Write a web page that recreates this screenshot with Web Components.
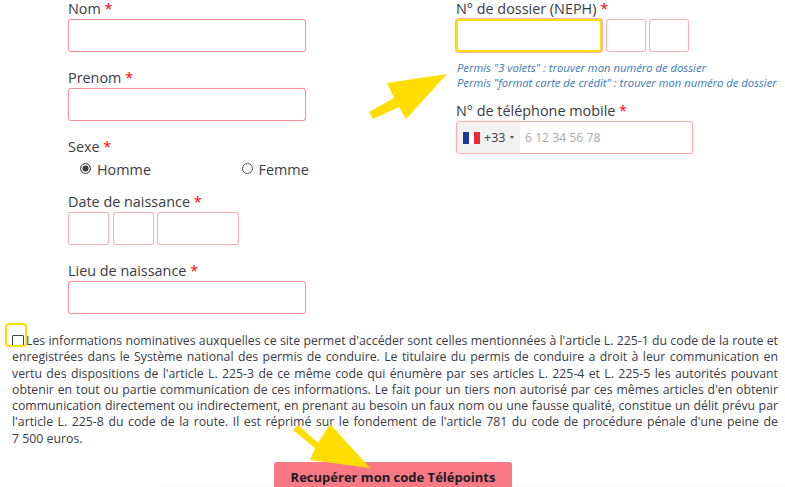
<!DOCTYPE html>
<html lang="fr">
<head>
<meta charset="utf-8">
<title>Telepoints</title>
<style>
html, body { margin: 0; padding: 0; background: #fff; }
body { font-family: "Open Sans", "DejaVu Sans", sans-serif; color: #3a3b45; overflow: hidden; height: 487px; }
</style>
</head>
<body>
<tp-page>
    <div slot="left">
        <tp-field label="Nom"><tp-input></tp-input></tp-field>
        <tp-field label="Prenom"><tp-input></tp-input></tp-field>
        <tp-sexe></tp-sexe>
        <tp-field label="Date de naissance">
            <tp-inputs columns="41px 41px 82px"><tp-input light></tp-input><tp-input light></tp-input><tp-input light></tp-input></tp-inputs>
        </tp-field>
        <tp-field label="Lieu de naissance"><tp-input></tp-input></tp-field>
    </div>
    <div slot="right">
        <tp-field label="N° de dossier (NEPH)">
            <tp-inputs columns="146px 40px 40px"><tp-input focused></tp-input><tp-input light></tp-input><tp-input light></tp-input></tp-inputs>
            <tp-help></tp-help>
        </tp-field>
        <tp-field label="N° de téléphone mobile"><tp-phone></tp-phone></tp-field>
    </div>
    <tp-legal slot="legal"></tp-legal>
    <tp-submit slot="submit">Recupérer mon code Télépoints</tp-submit>
</tp-page>

<script>
const templatePage = document.createElement("template");
templatePage.innerHTML = `
<style>
:host {
    display: block;
    position: relative;
    width: 785px;
    height: 487px;
    overflow: hidden;
    background: linear-gradient(#f6f6f6, #f6f6f6) 160px 485px / 625px 1px no-repeat;
}
#columns {
    display: grid;
    grid-template-columns: 238px 237px;
    column-gap: 150px;
    margin-top: -1px;
    padding: 0 0 0 68px;
    height: 324px;
}
.arrows { position: absolute; left: 0; top: 0; pointer-events: none; }
</style>
<div id="columns">
    <div><slot name="left"></slot></div>
    <div><slot name="right"></slot></div>
</div>
<slot name="legal"></slot>
<slot name="submit"></slot>
<svg class="arrows" width="785" height="487" viewBox="0 0 785 487">
    <path fill="#ffdd00" d="M447 74 387 83 394 98 369 112 373 119 399 107 406 119Z"/>
    <path fill="#ffdd00" d="M293 430 298 425 318 443 330 424 370 468 310 460 315 448Z"/>
</svg>
`;

class TpPage extends HTMLElement {
    constructor() {
        super();
        this.attachShadow({mode: 'open'});
        this.shadowRoot.appendChild(templatePage.content.cloneNode(true));
    }
}

const templateField = document.createElement("template");
templateField.innerHTML = `
<style>
:host { display: block; margin-bottom: 16px; }
label {
    display: block;
    height: 20px;
    font-size: 14.4px;
    line-height: 19px;
    color: #3a3b45;
}
b { color: #f00; font-weight: 400; }
</style>
<label><span id="text"></span> <b>*</b></label>
<slot></slot>
`;

class TpField extends HTMLElement {
    constructor() {
        super();
        this.attachShadow({mode: 'open'});
        this.shadowRoot.appendChild(templateField.content.cloneNode(true));
        this.shadowRoot.getElementById("text").textContent = this.getAttribute("label");
    }
}

const templateInput = document.createElement("template");
templateInput.innerHTML = `
<style>
:host { display: block; }
input {
    display: block;
    box-sizing: border-box;
    width: 100%;
    height: 33px;
    padding: 0 8px;
    border: 1px solid #f98f97;
    border-radius: 3px;
    background: #fff;
    box-shadow: 0 0 1px rgba(249, 143, 151, .6);
    outline: none;
    font: inherit;
}
:host([light]) input { border-color: #fbb0b5; }
:host([focused]) input { border: 2px solid #ffdd00; box-shadow: 0 0 0 1px #fbb0b5; }
</style>
<input type="text">
`;

class TpInput extends HTMLElement {
    constructor() {
        super();
        this.attachShadow({mode: 'open'});
        this.shadowRoot.appendChild(templateInput.content.cloneNode(true));
    }
}

const templateInputs = document.createElement("template");
templateInputs.innerHTML = `
<style>
:host { display: grid; column-gap: 3.5px; justify-content: start; }
</style>
<slot></slot>
`;

class TpInputs extends HTMLElement {
    constructor() {
        super();
        this.attachShadow({mode: 'open'});
        this.shadowRoot.appendChild(templateInputs.content.cloneNode(true));
        this.style.gridTemplateColumns = this.getAttribute("columns");
    }
}

const templateSexe = document.createElement("template");
templateSexe.innerHTML = `
<style>
:host { display: block; height: 55px; }
.label { height: 19px; line-height: 19px; font-size: 14.4px; }
b { color: #f00; font-weight: 400; }
.row { display: grid; grid-template-columns: 161.5px auto; padding: 4px 0 0 12px; font-size: 14.4px; line-height: 19px; }
.opt { display: flex; align-items: center; gap: 6px; }
.radio {
    box-sizing: border-box;
    width: 11px;
    height: 11px;
    margin-top: -3px;
    border: 1px solid #555;
    border-radius: 50%;
    flex: none;
}
.on { background: #3a3b45; box-shadow: inset 0 0 0 1.5px #fff; }
</style>
<div class="label">Sexe <b>*</b></div>
<div class="row">
    <div class="opt"><span class="radio on"></span>Homme</div>
    <div class="opt"><span class="radio"></span>Femme</div>
</div>
`;

class TpSexe extends HTMLElement {
    constructor() {
        super();
        this.attachShadow({mode: 'open'});
        this.shadowRoot.appendChild(templateSexe.content.cloneNode(true));
    }
}

const templateHelp = document.createElement("template");
templateHelp.innerHTML = `
<style>
:host { display: block; padding: 9px 0 0 1px; margin-bottom: -5px; width: 340px; }
a { display: block; font-size: 11.25px; line-height: 14.7px; font-style: italic; color: #3a79b8; text-decoration: none; white-space: nowrap; }
</style>
<a href="#">Permis "3 volets" : trouver mon numéro de dossier</a>
<a href="#">Permis "format carte de crédit" : trouver mon numéro de dossier</a>
`;

class TpHelp extends HTMLElement {
    constructor() {
        super();
        this.attachShadow({mode: 'open'});
        this.shadowRoot.appendChild(templateHelp.content.cloneNode(true));
    }
}

const templatePhone = document.createElement("template");
templatePhone.innerHTML = `
<style>
:host {
    display: flex;
    box-sizing: border-box;
    height: 33px;
    border: 1px solid #fbaab0;
    border-radius: 3px;
    box-shadow: 0 0 1px rgba(249, 143, 151, .6);
    overflow: hidden;
    font-size: 12.5px;
}
.dial {
    display: flex;
    align-items: center;
    box-sizing: border-box;
    width: 63px;
    padding-left: 6px;
    background: #f2f2f2;
    color: #3a3b45;
}
.flag { display: block; margin-right: 4px; }
.caret { width: 0; height: 0; margin-left: 5px; border-style: solid; border-width: 3px 2.5px 0; border-color: #555 transparent transparent; }
.num { padding-left: 5px; line-height: 31px; font-size: 12.2px; color: #a9a9a9; }
</style>
<div class="dial">
    <svg class="flag" width="17" height="12" viewBox="0 0 17 12"><rect width="6" height="12" fill="#1c3a94"/><rect x="6" width="5" height="12" fill="#fff"/><rect x="11" width="6" height="12" fill="#ed2939"/></svg>
    <span>+33</span><span class="caret"></span>
</div>
<div class="num">6 12 34 56 78</div>
`;

class TpPhone extends HTMLElement {
    constructor() {
        super();
        this.attachShadow({mode: 'open'});
        this.shadowRoot.appendChild(templatePhone.content.cloneNode(true));
    }
}

const templateLegal = document.createElement("template");
templateLegal.innerHTML = `
<style>
:host { display: block; position: relative; padding: 10px 7px 0 12px; font-size: 12.3px; line-height: 16.3px; color: #3a3b45; }
p { margin: 0; text-align: justify; }
.check {
    display: inline-block;
    box-sizing: border-box;
    width: 12px;
    height: 11px;
    margin-right: 2px;
    vertical-align: -1px;
    border: 1px solid #444;
    border-radius: 1px;
}
.mark { position: absolute; left: 5px; top: 0; box-sizing: border-box; width: 22px; height: 24px; border: 2px solid #ffdd00; border-radius: 4px; }
</style>
<span class="mark"></span>
<p><span class="check"></span>Les informations nominatives auxquelles ce site permet d'accéder sont celles mentionnées à l'article L. 225-1 du code de la route et enregistrées dans le Système national des permis de conduire. Le titulaire du permis de conduire a droit à leur communication en vertu des dispositions de l'article L. 225-3 de ce même code qui énumère par ses articles L. 225-4 et L. 225-5 les autorités pouvant obtenir en tout ou partie communication de ces informations. Le fait pour un tiers non autorisé par ces mêmes articles d'en obtenir communication directement ou indirectement, en prenant au besoin un faux nom ou une fausse qualité, constitue un délit prévu par l'article L. 225-8 du code de la route. Il est réprimé sur le fondement de l'article 781 du code de procédure pénale d'une peine de 7&nbsp;500 euros.</p>
`;

class TpLegal extends HTMLElement {
    constructor() {
        super();
        this.attachShadow({mode: 'open'});
        this.shadowRoot.appendChild(templateLegal.content.cloneNode(true));
    }
}

const templateSubmit = document.createElement("template");
templateSubmit.innerHTML = `
<style>
:host { display: block; margin: 15px 0 0 274px; width: 238px; }
button {
    display: block;
    width: 100%;
    height: 34px;
    padding: 0 0 4px;
    border: 0;
    border-radius: 3px;
    background: #f87884;
    color: #1c1c24;
    font: 700 13px "Open Sans", sans-serif;
}
</style>
<button><slot></slot></button>
`;

class TpSubmit extends HTMLElement {
    constructor() {
        super();
        this.attachShadow({mode: 'open'});
        this.shadowRoot.appendChild(templateSubmit.content.cloneNode(true));
    }
}

window.customElements.define('tp-page', TpPage);
window.customElements.define('tp-field', TpField);
window.customElements.define('tp-input', TpInput);
window.customElements.define('tp-inputs', TpInputs);
window.customElements.define('tp-sexe', TpSexe);
window.customElements.define('tp-help', TpHelp);
window.customElements.define('tp-phone', TpPhone);
window.customElements.define('tp-legal', TpLegal);
window.customElements.define('tp-submit', TpSubmit);
</script>
</body>
</html>
